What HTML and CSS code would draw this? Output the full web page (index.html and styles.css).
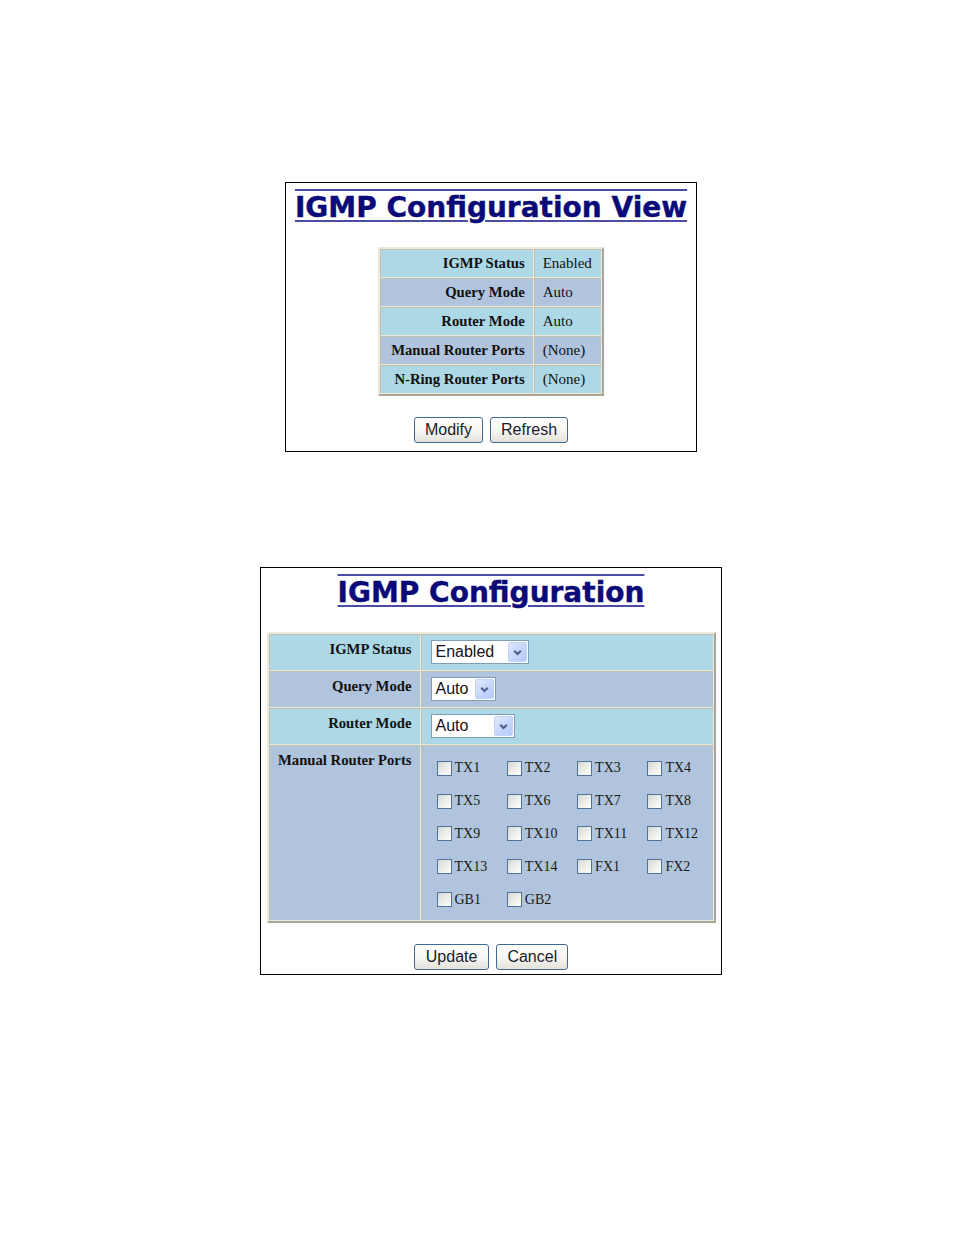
FILE: index.html
```html
<!DOCTYPE html>
<html>
<head>
<meta charset="utf-8">
<title>IGMP Configuration</title>
<link rel="stylesheet" href="styles.css">
</head>
<body>
<div class="page">
  <div class="panel panel-view">
    <h1 class="title">IGMP Configuration View</h1>
    <table class="grid grid-view">
      <tr class="row-a"><th>IGMP Status</th><td>Enabled</td></tr>
      <tr class="row-b"><th>Query Mode</th><td>Auto</td></tr>
      <tr class="row-a"><th>Router Mode</th><td>Auto</td></tr>
      <tr class="row-b"><th>Manual Router Ports</th><td>(None)</td></tr>
      <tr class="row-a"><th>N-Ring Router Ports</th><td>(None)</td></tr>
    </table>
    <div class="buttons">
      <button class="btn">Modify</button>
      <button class="btn">Refresh</button>
    </div>
  </div>

  <div class="panel panel-edit">
    <h1 class="title">IGMP Configuration</h1>
    <table class="grid grid-edit">
      <colgroup><col class="col-label"><col class="col-value"></colgroup>
      <tr class="row-a">
        <th>IGMP Status</th>
        <td><span class="select select-status"><span class="select-value">Enabled</span><span class="select-arrow"><svg viewBox="0 0 10 10" width="11" height="11"><path d="M2 3.4 L5 6.4 L8 3.4" stroke="#4d6185" stroke-width="1.9" fill="none"/></svg></span></span></td>
      </tr>
      <tr class="row-b">
        <th>Query Mode</th>
        <td><span class="select select-query"><span class="select-value">Auto</span><span class="select-arrow"><svg viewBox="0 0 10 10" width="11" height="11"><path d="M2 3.4 L5 6.4 L8 3.4" stroke="#4d6185" stroke-width="1.9" fill="none"/></svg></span></span></td>
      </tr>
      <tr class="row-a">
        <th>Router Mode</th>
        <td><span class="select select-router"><span class="select-value">Auto</span><span class="select-arrow"><svg viewBox="0 0 10 10" width="11" height="11"><path d="M2 3.4 L5 6.4 L8 3.4" stroke="#4d6185" stroke-width="1.9" fill="none"/></svg></span></span></td>
      </tr>
      <tr class="row-b row-ports">
        <th>Manual Router Ports</th>
        <td>
          <div class="ports">
            <label class="port"><span class="check"></span>TX1</label>
            <label class="port"><span class="check"></span>TX2</label>
            <label class="port"><span class="check"></span>TX3</label>
            <label class="port"><span class="check"></span>TX4</label>
            <label class="port"><span class="check"></span>TX5</label>
            <label class="port"><span class="check"></span>TX6</label>
            <label class="port"><span class="check"></span>TX7</label>
            <label class="port"><span class="check"></span>TX8</label>
            <label class="port"><span class="check"></span>TX9</label>
            <label class="port"><span class="check"></span>TX10</label>
            <label class="port"><span class="check"></span>TX11</label>
            <label class="port"><span class="check"></span>TX12</label>
            <label class="port"><span class="check"></span>TX13</label>
            <label class="port"><span class="check"></span>TX14</label>
            <label class="port"><span class="check"></span>FX1</label>
            <label class="port"><span class="check"></span>FX2</label>
            <label class="port"><span class="check"></span>GB1</label>
            <label class="port"><span class="check"></span>GB2</label>
          </div>
        </td>
      </tr>
    </table>
    <div class="buttons">
      <button class="btn btn-update">Update</button>
      <button class="btn">Cancel</button>
    </div>
  </div>
</div>
</body>
</html>
```

FILE: styles.css
```css
html, body {
  margin: 0;
  padding: 0;
  background: #ffffff;
}

.page {
  display: flex;
  flex-direction: column;
  align-items: center;
  padding: 182px 0 0 28px;
  gap: 115px;
}

.panel {
  box-sizing: border-box;
  border: 1px solid #000000;
  padding: 8px 0 8px 0;
  display: flex;
  flex-direction: column;
  align-items: center;
}

.panel-view {
  width: 412px;
}

.panel-edit {
  width: 462px;
  padding-bottom: 4px;
}

.title {
  margin: 0;
  font-family: "DejaVu Sans", Verdana, sans-serif;
  font-weight: bold;
  font-size: 28px;
  line-height: 34px;
  color: #0a0a78;
  text-align: center;
  text-decoration: underline overline;
  text-decoration-color: #4b4ba8;
  text-decoration-thickness: 2px;
  text-underline-offset: 3px;
  -webkit-text-stroke: 0.4px #0a0a78;
}

.grid {
  margin-top: 22px;
  border-collapse: separate;
  border-spacing: 0;
  border-style: solid;
  border-width: 2px;
  border-color: #ebe8dc #a9a596 #a9a596 #ebe8dc;
  font-family: "Liberation Serif", "Times New Roman", serif;
  font-size: 15px;
  color: #111111;
}

.grid th,
.grid td {
  border-style: solid;
  border-width: 1px;
  border-color: #c4c0b0 #ebe8dc #ebe8dc #c4c0b0;
  padding: 0 8px;
  white-space: nowrap;
}

.grid th {
  font-weight: bold;
  font-size: 14.7px;
  text-align: right;
}

.grid td {
  font-weight: normal;
  text-align: left;
}

.row-a th, .row-a td {
  background: #add8e6;
}

.row-b th, .row-b td {
  background: #b0c4de;
}

.grid-view th,
.grid-view td {
  height: 29px;
  box-sizing: border-box;
    vertical-align: middle;
}

.grid-view th {
  padding: 0 8px 0 10px;
}

.grid-view td {
  padding: 0 9px 0 8px;
}

.grid-edit {
  width: 449px;
  table-layout: fixed;
}

.col-label { width: 152px; }
.col-value { width: 293px; }

.grid-edit th {
  vertical-align: top;
  padding: 6px 8px 0 6px;
  height: 37px;
  box-sizing: border-box;
}

.grid-edit td {
  vertical-align: top;
  padding: 5px 8px 0 9px;
  height: 37px;
  box-sizing: border-box;
}

.grid-edit .row-ports th,
.grid-edit .row-ports td {
  height: 176px;
}

.select {
  box-sizing: border-box;
  display: flex;
  align-items: center;
  justify-content: space-between;
  height: 24px;
  border: 1px solid #7f9db9;
  background: #ffffff;
  padding: 1px 1px 1px 4px;
  font-family: "Liberation Sans", Arial, sans-serif;
  font-size: 16px;
  color: #1a1018;
}

.select-status { width: 98px; }
.select-query { width: 65px; }
.select-router { width: 84px; }

.select-value {
  line-height: 20px;
}

.select-arrow {
  box-sizing: border-box;
  width: 19px;
  height: 20px;
  border: 1px solid #c3d3fd;
  border-radius: 2px;
  background: linear-gradient(135deg, #dfe8fd 0%, #c5d6fb 55%, #b4c9f6 100%);
  display: flex;
  align-items: center;
  justify-content: center;
}

.ports {
  display: grid;
  grid-template-columns: repeat(4, 70.3px);
  grid-auto-rows: 32.8px;
  padding-top: 1px;
}

.port {
  display: flex;
  align-items: center;
  padding-left: 6px;
  font-family: "Liberation Serif", "Times New Roman", serif;
  font-size: 14px;
  color: #1a1a10;
}

.check {
  box-sizing: border-box;
  width: 15px;
  height: 15px;
  border: 1px solid #4f7399;
  background: linear-gradient(135deg, #d6d6d0 0%, #ececea 50%, #ffffff 100%);
  margin-right: 3px;
}

.buttons {
  margin-top: 21px;
  display: flex;
  gap: 7px;
}

.btn {
  box-sizing: border-box;
  height: 26px;
  padding: 0 10px;
  border: 1px solid #3f6a94;
  border-radius: 3px;
  background: linear-gradient(#ffffff 0%, #f6f6f3 55%, #e2e0d8 100%);
  font-family: "Liberation Sans", Arial, sans-serif;
  font-size: 16px;
  line-height: 24px;
  color: #1b1b30;
}

.btn-update {
  padding: 0 11px;
}
```
